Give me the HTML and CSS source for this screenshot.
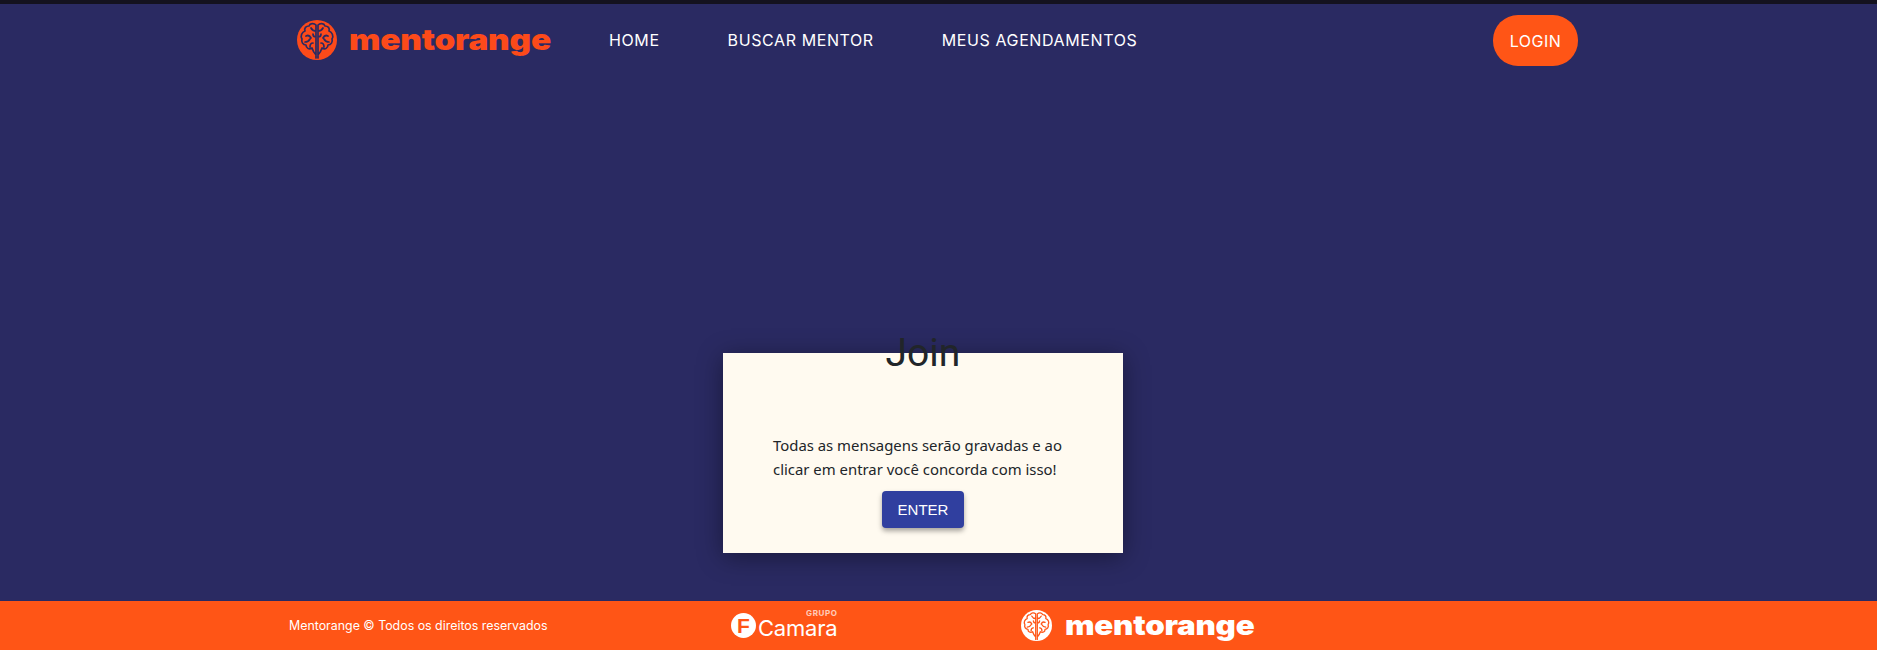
FILE: index.html
```html
<!DOCTYPE html>
<html lang="pt-BR">
<head>
    <meta charset="UTF-8">
    <meta name="viewport" content="width=device-width, initial-scale=1.0">
    <title>Mentorange</title>
    <link rel="stylesheet" href="styles.css">
</head>
<body>
    <header class="header">
        <a class="logo" href="#">
            <svg class="brain" viewBox="0 0 40 40">
                <circle cx="20" cy="20" r="20" fill="#fc4a1a"/>
                <g fill="none" stroke="#2a2a62" stroke-width="1.7" stroke-linecap="round" stroke-linejoin="round">
                    <path d="M19 5c-2-2-6-2-7 1-3 0-5 2-4 5-3 1-5 5-3 8-1 3 1 6 4 6 0 3 3 5 6 3 1 3 3 6 4 7M19 5v33M14 8c1 2 3 3 5 3M9 16c2-1 4 0 5 2M8 22c2 0 4-1 5-3M13 27c0-2 1-4 3-4M19 17c-2 0-3-1-3-3"/>
                    <path d="M21 5c2-2 6-2 7 1 3 0 5 2 4 5 3 1 5 5 3 8 1 3-1 6-4 6 0 3-3 5-6 3-1 3-3 6-4 7M21 5v33M26 8c-1 2-3 3-5 3M31 16c-2-1-4 0-5 2M32 22c-2 0-4-1-5-3M27 27c0-2-1-4-3-4M21 17c2 0 3-1 3-3"/>
                </g>
            </svg>
            <span class="logo-text">mentorange</span>
        </a>
        <nav class="nav">
            <a href="#">HOME</a>
            <a href="#">BUSCAR MENTOR</a>
            <a href="#">MEUS AGENDAMENTOS</a>
        </nav>
        <a class="login" href="#">LOGIN</a>
    </header>

    <main class="main">
        <section class="card">
            <h1>Join</h1>
            <p>Todas as mensagens serão gravadas e ao<br>clicar em entrar você concorda com isso!</p>
            <button class="enter">ENTER</button>
        </section>
    </main>

    <footer class="footer">
        <span class="copy">Mentorange © Todos os direitos reservados</span>
        <div class="camara">
            <span class="camara-f">F</span>
            <span class="camara-name"><small>GRUPO</small>Camara</span>
        </div>
        <div class="footer-logo">
            <svg class="brain-small" viewBox="0 0 40 40">
                <circle cx="20" cy="20" r="20" fill="#fff"/>
                <g fill="none" stroke="#ff5516" stroke-width="1.7" stroke-linecap="round" stroke-linejoin="round">
                    <path d="M19 5c-2-2-6-2-7 1-3 0-5 2-4 5-3 1-5 5-3 8-1 3 1 6 4 6 0 3 3 5 6 3 1 3 3 6 4 7M19 5v33M14 8c1 2 3 3 5 3M9 16c2-1 4 0 5 2M8 22c2 0 4-1 5-3M13 27c0-2 1-4 3-4M19 17c-2 0-3-1-3-3"/>
                    <path d="M21 5c2-2 6-2 7 1 3 0 5 2 4 5 3 1 5 5 3 8 1 3-1 6-4 6 0 3-3 5-6 3-1 3-3 6-4 7M21 5v33M26 8c-1 2-3 3-5 3M31 16c-2-1-4 0-5 2M32 22c-2 0-4-1-5-3M27 27c0-2-1-4-3-4M21 17c2 0 3-1 3-3"/>
                </g>
            </svg>
            <span class="footer-logo-text">mentorange</span>
        </div>
    </footer>
</body>
</html>
```

FILE: styles.css
```css
* {
    margin: 0;
    padding: 0;
    box-sizing: border-box;
}

body {
    font-family: "Noto Sans", Arial, sans-serif;
    background-color: #2a2a62;
    border-top: 4px solid #14121f;
    display: flex;
    flex-direction: column;
    height: 100vh;
    overflow: hidden;
}

a {
    color: white;
    text-decoration: none;
}

.header {
    display: flex;
    align-items: center;
    height: 72px;
    padding: 0 299px 0 297px;
}

.logo {
    display: flex;
    align-items: center;
    gap: 12px;
    width: 312px;
}

.brain {
    width: 40px;
    height: 40px;
}

.logo-text {
    font-family: Inter, Arial, sans-serif;
    font-weight: 900;
    font-size: 29px;
    line-height: 40px;
    color: #fc4a1a;
    letter-spacing: -0.2px;
    transform: scaleX(1.15);
    transform-origin: left;
}

.nav {
    display: flex;
    gap: 68px;
    flex: 1;
    font-family: Inter, Arial, sans-serif;
    font-size: 16px;
    letter-spacing: 0.6px;
}

.login {
    background-color: #ff5516;
    font-family: Inter, Arial, sans-serif;
    font-size: 16px;
    letter-spacing: 0.5px;
    width: 85px;
    height: 51px;
    margin-top: 1px;
    border-radius: 25px;
    display: flex;
    align-items: center;
    justify-content: center;
}

.main {
    flex: 1;
    display: flex;
    justify-content: center;
    align-items: flex-end;
    padding: 0 31px 48px 0;
}

.card {
    background-color: #fffaf0;
    width: 400px;
    height: 200px;
    box-shadow: 0 4px 24px rgba(0, 0, 0, 0.4);
    text-align: center;
    color: #212529;
    padding: 0 50px;
}

.card h1 {
    font-family: Roboto, Arial, sans-serif;
    font-weight: 400;
    font-size: 39px;
    line-height: 48px;
    margin-top: -24px;
}

.card p {
    font-size: 14.9px;
    line-height: 24px;
    text-align: left;
    margin-top: 56px;
    white-space: nowrap;
}

.enter {
    background-color: #303f9f;
    color: white;
    border: none;
    border-radius: 4px;
    font-family: "Liberation Sans", Arial, sans-serif;
    font-size: 15px;
    width: 82px;
    height: 37px;
    margin-top: 10px;
    box-shadow: 0 3px 5px rgba(0, 0, 0, 0.35);
}

.footer {
    background-color: #ff5516;
    color: white;
    height: 49px;
    flex-shrink: 0;
    display: flex;
    align-items: center;
    padding-left: 289px;
}

.copy {
    font-family: Inter, Arial, sans-serif;
    font-size: 12.4px;
    width: 442px;
}

.camara {
    display: flex;
    align-items: center;
    width: 290px;
    gap: 2px;
}

.camara-f {
    background-color: white;
    color: #ff5516;
    font-family: "Liberation Sans", Arial, sans-serif;
    font-weight: 700;
    font-size: 21px;
    width: 25px;
    height: 25px;
    border-radius: 50%;
    display: flex;
    align-items: center;
    justify-content: center;
}

.camara-name {
    font-family: Inter, Arial, sans-serif;
    font-size: 22px;
    line-height: 22px;
    letter-spacing: -0.2px;
    position: relative;
    top: 2px;
}

.camara-name small {
    position: absolute;
    right: 0;
    top: -8px;
    font-size: 8px;
    line-height: 8px;
    font-weight: 700;
    letter-spacing: 0.6px;
    opacity: 0.7;
}

.footer-logo {
    display: flex;
    align-items: center;
    gap: 13px;
}

.brain-small {
    width: 31px;
    height: 31px;
}

.footer-logo-text {
    font-family: Inter, Arial, sans-serif;
    font-weight: 900;
    font-size: 27px;
    line-height: 32px;
    letter-spacing: -0.2px;
    transform: scaleX(1.16);
    transform-origin: left;
}
```
